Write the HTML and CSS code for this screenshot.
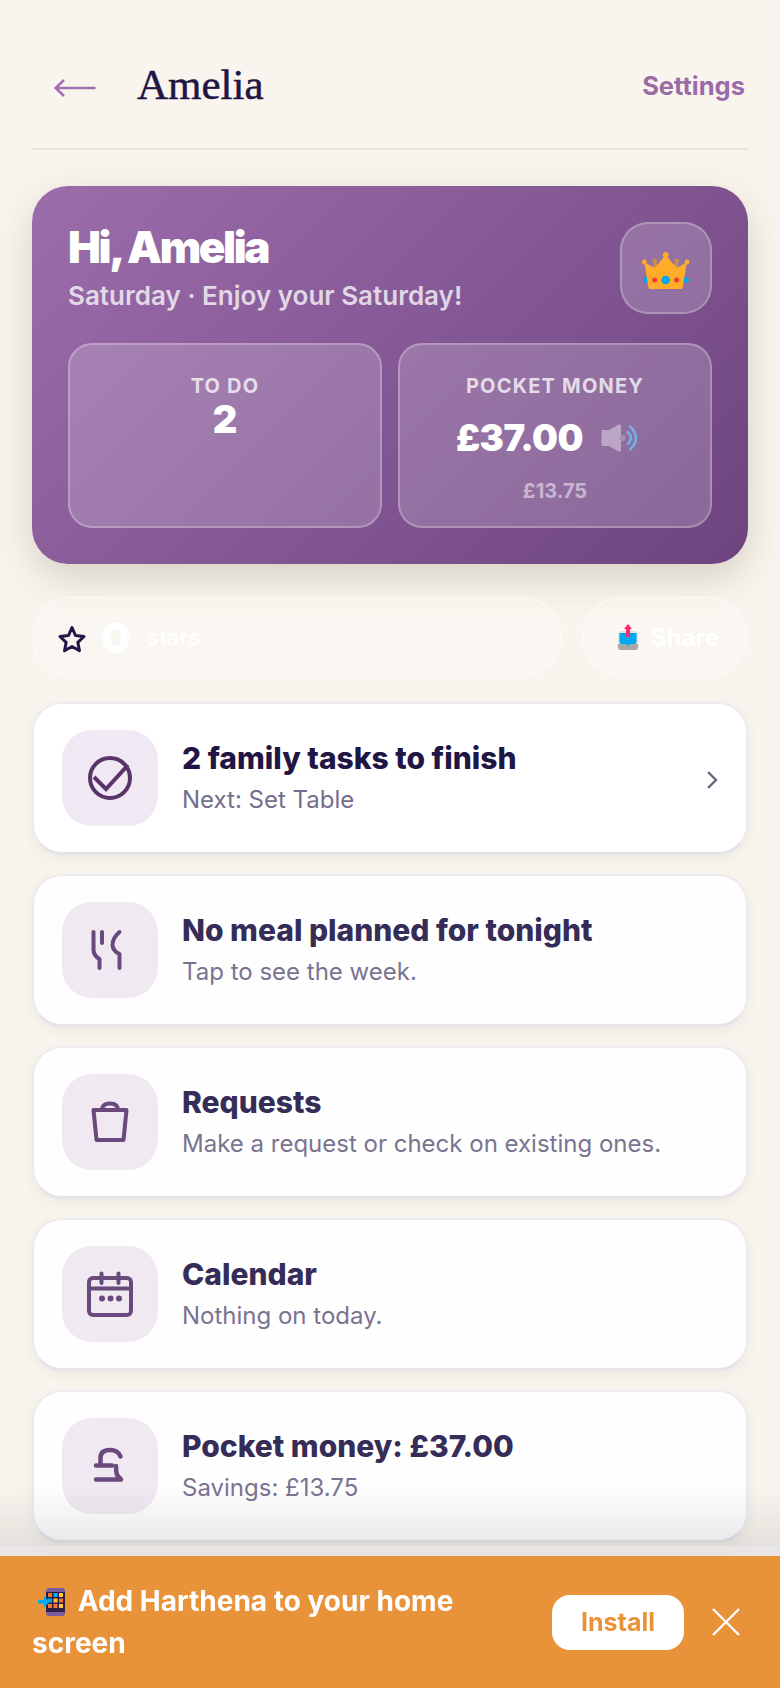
FILE: index.html
```html
<!DOCTYPE html>
<html lang="en">
<head>
    <meta charset="UTF-8">
    <meta name="viewport" content="width=device-width, initial-scale=1.0">
    <title>Amelia</title>
    <link rel="stylesheet" href="styles.css">
</head>
<body>

    <div class="page">
        <header class="topbar">
            <svg class="back" viewBox="0 0 42 18" width="42" height="18" fill="none" stroke="#a06fb4" stroke-width="2.600">
                <path d="M41.500 9H1.500M10 1L1.500 9L10 17"/>
            </svg>
            <h1 class="name">Amelia</h1>
            <a class="settings">Settings</a>
        </header>

        <section class="hero">
            <div class="hero-top">
                <div>
                    <h2 class="hi">Hi, Amelia</h2>
                    <p class="hi-sub">Saturday · Enjoy your Saturday!</p>
                </div>
                <div class="crown-box">
                    <svg viewBox="0 0 48 40" width="48" height="40">
                        <circle cx="3.700" cy="28" r="2.800" fill="#00a8e8"/>
                        <circle cx="44" cy="28" r="2.800" fill="#00a8e8"/>
                        <circle cx="12.700" cy="9" r="2.400" fill="#c98f4e"/>
                        <circle cx="34.700" cy="9" r="2.400" fill="#c98f4e"/>
                        <path d="M10.500 18L12.700 9L18 16ZM37 18L34.700 9L29.500 16Z" fill="#c98f4e"/>
                        <path d="M2.300 10L12.700 16L23.700 3L34.700 16L45 10L40.500 36Q40.500 37 39 37H8Q6.500 37 6.500 36Z" fill="#ffac29"/>
                        <circle cx="2.300" cy="10" r="2.400" fill="#ffac29"/>
                        <circle cx="45" cy="10" r="2.400" fill="#ffac29"/>
                        <circle cx="23.700" cy="3" r="3" fill="#ffac29"/>
                        <circle cx="23.700" cy="28" r="4.300" fill="#00a8e8"/>
                        <circle cx="12.700" cy="28" r="2.500" fill="#f5392c"/>
                        <circle cx="34.500" cy="28" r="2.500" fill="#f5392c"/>
                    </svg>
                </div>
            </div>
            <div class="tiles">
                <div class="tile">
                    <div class="tile-label">TO DO</div>
                    <div class="tile-num">2</div>
                </div>
                <div class="tile">
                    <div class="tile-label">POCKET MONEY</div>
                    <div class="money-row">
                        <span class="money">£37.00</span>
                        <svg viewBox="0 0 36 28" width="36" height="28" fill="none">
                            <path d="M1.500 6H8L17.500 0.500Q20 0 20 2V26Q20 28 17.500 27.500L8 22H1.500Q0.500 22 0.500 21V7Q0.500 6 1.500 6Z" fill="#bba6c6"/>
                            <circle cx="21.500" cy="14" r="3" fill="#a88fb6"/>
                            <path d="M26 7.500Q34 14 26 20.500M28.500 2Q41.500 14 28.500 26" stroke="#74b2e6" stroke-width="2.500"/>
                        </svg>
                    </div>
                    <div class="tile-small">£13.75</div>
                </div>
            </div>
        </section>

        <div class="pills">
            <div class="pill pill-stars">
                <svg class="star" viewBox="0 0 28 28" width="28" height="28" fill="none" stroke="#1f1645" stroke-width="3" stroke-linejoin="round">
                    <path d="M14 2.500L17.500 10.500L26 11.500L19.800 17.300L21.500 25.700L14 21.500L6.500 25.700L8.200 17.300L2 11.500L10.500 10.500Z"/>
                </svg>
                <span class="stars-num">0</span>
                <span class="stars-word">stars</span>
            </div>
            <div class="pill pill-share">
                <svg viewBox="0 0 22 26" width="22" height="26">
                    <rect x="1" y="7" width="20" height="19" rx="3" fill="#dfe3e6"/>
                    <path d="M1 20H21V23Q21 26 18 26H4Q1 26 1 23Z" fill="#a8a8a8"/>
                    <path d="M2.500 9H19.500V18Q19.500 20 17.500 20H13L11 22L9 20H4.500Q2.500 20 2.500 18Z" fill="#00a8f0"/>
                    <path d="M11 0L15 5H13V13H9V5H7Z" fill="#ff2a68"/>
                </svg>
                <span>Share</span>
            </div>
        </div>

        <div class="cards">
            <div class="card card-first">
                <div class="card-icon">
                    <svg viewBox="0 0 48 48" width="48" height="48" fill="none" stroke="currentColor" stroke-width="4">
                        <circle cx="24" cy="24" r="20"/>
                        <path d="M8 23L20 35L42 11"/>
                    </svg>
                </div>
                <div class="card-text">
                    <div class="card-title">2 family tasks to finish</div>
                    <div class="card-sub">Next: Set Table</div>
                </div>
                <svg class="chev" viewBox="0 0 12 20" width="12" height="20" fill="none" stroke="#68627f" stroke-width="2.400">
                    <path d="M2 2L10 10L2 18"/>
                </svg>
            </div>
            <div class="card">
                <div class="card-icon">
                    <svg viewBox="0 0 48 48" width="48" height="48" fill="none" stroke="currentColor" stroke-width="4" stroke-linecap="round" stroke-linejoin="round">
                        <path d="M7.500 6V24Q8 30 13.500 33V42M16 6V17M33.500 6Q26.500 12 26.500 19Q27 25 33.500 28V42"/>
                    </svg>
                </div>
                <div class="card-text">
                    <div class="card-title">No meal planned for tonight</div>
                    <div class="card-sub">Tap to see the week.</div>
                </div>
            </div>
            <div class="card">
                <div class="card-icon">
                    <svg viewBox="0 0 48 48" width="48" height="48" fill="none" stroke="currentColor" stroke-width="4" stroke-linejoin="round">
                        <path d="M7.500 12H40.500L37.500 42H10.500ZM16 12Q16 5.500 24 5.500Q32 5.500 32 12"/>
                    </svg>
                </div>
                <div class="card-text">
                    <div class="card-title">Requests</div>
                    <div class="card-sub">Make a request or check on existing ones.</div>
                </div>
            </div>
            <div class="card">
                <div class="card-icon">
                    <svg viewBox="0 0 48 48" width="48" height="48" fill="none" stroke="currentColor" stroke-width="4" stroke-linecap="round">
                        <rect x="3" y="8" width="42" height="37" rx="4"/>
                        <path d="M3 18.500H45M15.500 3.500V13M32.500 3.500V13"/>
                        <circle cx="16" cy="28.500" r="3" fill="currentColor" stroke="none"/>
                        <circle cx="24.500" cy="28.500" r="3" fill="currentColor" stroke="none"/>
                        <circle cx="33" cy="28.500" r="3" fill="currentColor" stroke="none"/>
                    </svg>
                </div>
                <div class="card-text">
                    <div class="card-title">Calendar</div>
                    <div class="card-sub">Nothing on today.</div>
                </div>
            </div>
            <div class="card">
                <div class="card-icon">
                    <svg viewBox="0 0 48 48" width="48" height="48" fill="none" stroke="currentColor" stroke-width="4.500" stroke-linecap="round" stroke-linejoin="round">
                        <path d="M14.500 22V16Q14.500 8 24 8Q32 8 34.500 14.500M10 23.500H26M30 24Q30 30 31 33L35 37.500H10"/>
                    </svg>
                </div>
                <div class="card-text">
                    <div class="card-title">Pocket money: £37.00</div>
                    <div class="card-sub">Savings: £13.75</div>
                </div>
            </div>
        </div>
    </div>

    <div class="fade"></div>

    <div class="install">
        <p class="install-text">
            <svg viewBox="0 0 28 28" width="28" height="28">
                <rect x="8" y="0" width="19" height="28" rx="3" fill="#7a5da0"/>
                <rect x="8" y="4" width="19" height="20" fill="#2d1f45"/>
                <rect x="10" y="5" width="4" height="4" fill="#f5792c"/><rect x="15.500" y="5" width="4" height="4" fill="#00a8f0"/><rect x="21" y="5" width="4" height="4" fill="#ffc83d"/>
                <rect x="10" y="10.500" width="4" height="4" fill="#00a8f0"/><rect x="15.500" y="10.500" width="4" height="4" fill="#ffc83d"/><rect x="21" y="10.500" width="4" height="4" fill="#f5792c"/>
                <rect x="10" y="16" width="4" height="4" fill="#f5792c"/><rect x="15.500" y="16" width="4" height="4" fill="#f5792c"/><rect x="21" y="16" width="4" height="4" fill="#ffc83d"/>
                <path d="M0 12H6V8L12 13.700L6 19.500V15.500H0Z" fill="#00a8f0"/>
            </svg>
            Add Harthena to your home screen
        </p>
        <button class="install-btn">Install</button>
        <svg class="install-x" viewBox="0 0 28 28" width="28" height="28" fill="none" stroke="#fff" stroke-width="2.400">
            <path d="M1 1L27 27M27 1L1 27"/>
        </svg>
    </div>

</body>
</html>
```

FILE: styles.css
```css
/* General */
html, body {
    height: 100%;
    overflow: hidden;
}

body {
    margin: 0;
    font-family: Inter, "Liberation Sans", sans-serif;
    background-color: #f9f5ee;
    color: #1f1645;
}

.page {
    padding: 0 32px;
}

/* Top bar */
.topbar {
    display: flex;
    align-items: center;
    height: 150px;
    padding: 22px 3px 0 22px;
    box-sizing: border-box;
    border-bottom: 2px solid #e8e3dc;
}

.back {
    margin-top: 6px;
}

.name {
    margin: 0 0 2px 41px;
    font-family: "Liberation Serif", serif;
    font-weight: 400;
    font-size: 43px;
    -webkit-text-stroke: 0.5px #1f1645;
    flex: 1;
}

.settings {
    font-size: 25.500px;
    font-weight: 700;
    color: #9b6ba8;
}

/* Purple card */
.hero {
    margin-top: 36px;
    padding: 36px;
    height: 378px;
    box-sizing: border-box;
    border-radius: 36px;
    background: linear-gradient(135deg, #9c6dab, #6d4480);
    box-shadow: 0 14px 40px rgba(80, 60, 40, 0.2);
    color: white;
}

.hero-top {
    display: flex;
    justify-content: space-between;
}

.hi {
    margin: 0;
    font-size: 44px;
    font-weight: 900;
    letter-spacing: -2.400px;
    line-height: 50px;
}

.hi-sub {
    margin: 8px 0 0;
    font-size: 26px;
    font-weight: 600;
    line-height: 32px;
    color: rgba(255, 255, 255, 0.75);
}

.crown-box {
    width: 92px;
    height: 92px;
    box-sizing: border-box;
    padding-top: 8px;
    display: flex;
    align-items: center;
    justify-content: center;
    border-radius: 28px;
    border: 2px solid rgba(255, 255, 255, 0.25);
    background-color: rgba(255, 255, 255, 0.18);
}

.tiles {
    display: grid;
    grid-template-columns: 1fr 1fr;
    gap: 16px;
    margin-top: 29px;
}

.tile {
    height: 185px;
    box-sizing: border-box;
    padding: 29px 10px 0;
    text-align: center;
    border-radius: 24px;
    border: 2px solid rgba(255, 255, 255, 0.25);
    background-color: rgba(255, 255, 255, 0.18);
}

.tile-label {
    font-size: 20px;
    font-weight: 700;
    letter-spacing: 1.200px;
    line-height: 24px;
    color: rgba(255, 255, 255, 0.75);
}

.tile-num {
    margin-top: 1px;
    font-size: 38px;
    font-weight: 900;
    line-height: 40px;
}

.money-row {
    display: flex;
    align-items: center;
    justify-content: center;
    gap: 18px;
    margin-top: 15px;
    padding-right: 17px;
}

.money {
    font-size: 36.500px;
    font-weight: 900;
    letter-spacing: -0.500px;
    line-height: 50px;
}

.tile-small {
    margin-top: 16px;
    font-size: 20px;
    font-weight: 700;
    line-height: 24px;
    color: rgba(255, 255, 255, 0.5);
}

/* Stars and share */
.pills {
    display: flex;
    gap: 20px;
    margin-top: 32px;
}

.pill {
    display: flex;
    align-items: center;
    height: 82px;
    box-sizing: border-box;
    border-radius: 41px;
    border: 2px solid rgba(255, 255, 255, 0.3);
    background-color: rgba(255, 255, 255, 0.18);
    color: white;
}

.pill-stars {
    flex: 1;
    padding-left: 24px;
}

.star {
    margin-top: 4px;
}

.stars-num {
    margin-left: 15px;
    font-size: 42px;
    font-weight: 900;
}

.stars-word {
    margin-left: 16px;
    font-size: 22px;
    font-weight: 600;
}

.pill-share {
    width: 166px;
    padding-left: 6px;
    justify-content: center;
    gap: 12px;
    font-size: 24px;
    font-weight: 700;
}

/* Menu cards */
.cards {
    display: flex;
    flex-direction: column;
    gap: 19px;
    margin-top: 24px;
}

.card {
    display: flex;
    align-items: center;
    height: 153px;
    box-sizing: border-box;
    padding: 0 28px;
    border-radius: 30px;
    border: 2px solid #eeebf0;
    border-bottom: 3px solid #e5e3ea;
    background-color: white;
    box-shadow: 0 4px 14px rgba(80, 60, 40, 0.07);
    opacity: 0.95;
}

.card-first {
    opacity: 1;
}

.card-icon {
    width: 96px;
    height: 96px;
    flex-shrink: 0;
    display: flex;
    align-items: center;
    justify-content: center;
    border-radius: 30px;
    background-color: #f0e9f3;
    color: #634078;
}

.card-first .card-icon {
    color: #5a3468;
}

.card-text {
    flex: 1;
    margin: -2px 0 0 24px;
}

.card-title {
    font-size: 30px;
    font-weight: 800;
    line-height: 36px;
    color: #2b2350;
}

.card-first .card-title {
    color: #1f1645;
}

.card-sub {
    margin-top: 9px;
    font-size: 24px;
    line-height: 30px;
    color: #746d8c;
}

.chev {
    margin-top: 4px;
}

/* Bottom banner */
.fade {
    position: fixed;
    left: 0;
    right: 0;
    bottom: 142px;
    height: 60px;
    background: linear-gradient(rgba(120, 120, 130, 0), rgba(120, 120, 130, 0.16));
}

.install {
    position: fixed;
    left: 0;
    right: 0;
    bottom: 0;
    height: 132px;
    box-sizing: border-box;
    padding: 0 40px 0 32px;
    display: flex;
    align-items: center;
    background-color: #e8923a;
    color: white;
    box-shadow: 0 -10px 0 rgba(230, 228, 228, 0.95);
}

.install-text {
    flex: 1;
    margin: 0;
    font-size: 28px;
    font-weight: 700;
    line-height: 42px;
}

.install-text svg {
    margin: 0 5px 0 6px;
    vertical-align: -5px;
}

.install-btn {
    width: 132px;
    height: 55px;
    margin-left: 24px;
    border: 0;
    border-radius: 18px;
    background-color: white;
    color: #e8923a;
    font-family: inherit;
    font-size: 25px;
    font-weight: 700;
}

.install-x {
    margin-left: 28px;
    flex-shrink: 0;
}
```
